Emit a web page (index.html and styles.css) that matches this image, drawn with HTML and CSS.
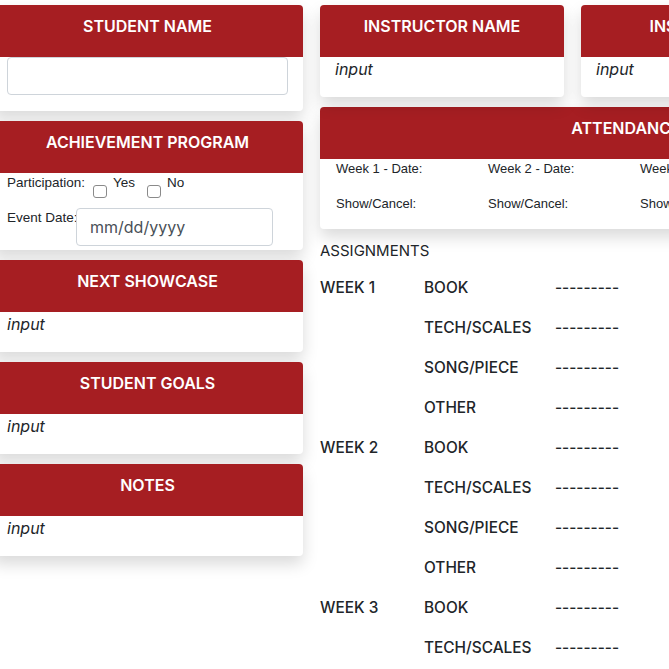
FILE: index.html
```html
<!DOCTYPE html>
<html>
<head>
<meta charset="utf-8">
<link rel="stylesheet" href="styles.css">
</head>
<body>
<div class="page">
  <div class="left">
    <section class="card c-name">
      <h2 class="card-head">STUDENT NAME</h2>
      <div class="card-body pad-bottom">
        <div class="text-field"></div>
      </div>
    </section>
    <section class="card">
      <h2 class="card-head">ACHIEVEMENT PROGRAM</h2>
      <div class="card-body achieve">
        <div class="part-row">
          <span class="small-label">Participation:</span>
          <span class="check"></span>
          <span class="small-label opt">Yes</span>
          <span class="check"></span>
          <span class="small-label opt">No</span>
        </div>
        <div class="date-row">
          <span class="small-label date-label">Event Date:</span>
          <div class="date-field">mm/dd/yyyy</div>
        </div>
      </div>
    </section>
    <section class="card">
      <h2 class="card-head">NEXT SHOWCASE</h2>
      <div class="card-body"><p class="input-text">input</p></div>
    </section>
    <section class="card">
      <h2 class="card-head">STUDENT GOALS</h2>
      <div class="card-body"><p class="input-text">input</p></div>
    </section>
    <section class="card">
      <h2 class="card-head">NOTES</h2>
      <div class="card-body"><p class="input-text">input</p></div>
    </section>
  </div>

  <div class="right">
    <div class="top-row">
      <section class="card narrow">
        <h2 class="card-head">INSTRUCTOR NAME</h2>
        <div class="card-body"><p class="input-text">input</p></div>
      </section>
      <section class="card narrow">
        <h2 class="card-head">INSTRUMENT</h2>
        <div class="card-body"><p class="input-text">input</p></div>
      </section>
    </div>
    <section class="card attendance">
      <h2 class="card-head">ATTENDANCE</h2>
      <div class="card-body att-body">
        <p>Week 1 - Date:</p><p>Week 2 - Date:</p><p>Week 3 - Date:</p><p>Week 4 - Date:</p>
        <p>Show/Cancel:</p><p>Show/Cancel:</p><p>Show/Cancel:</p><p>Show/Cancel:</p>
      </div>
    </section>
    <p class="assign-title">ASSIGNMENTS</p>
    <div class="assign-grid">
      <span>WEEK 1</span><span>BOOK</span><span class="dash">---------</span>
      <span></span><span>TECH/SCALES</span><span class="dash">---------</span>
      <span></span><span>SONG/PIECE</span><span class="dash">---------</span>
      <span></span><span>OTHER</span><span class="dash">---------</span>
      <span>WEEK 2</span><span>BOOK</span><span class="dash">---------</span>
      <span></span><span>TECH/SCALES</span><span class="dash">---------</span>
      <span></span><span>SONG/PIECE</span><span class="dash">---------</span>
      <span></span><span>OTHER</span><span class="dash">---------</span>
      <span>WEEK 3</span><span>BOOK</span><span class="dash">---------</span>
      <span></span><span>TECH/SCALES</span><span class="dash">---------</span>
      <span></span><span>SONG/PIECE</span><span class="dash">---------</span>
      <span></span><span>OTHER</span><span class="dash">---------</span>
    </div>
  </div>
</div>
</body>
</html>
```

FILE: styles.css
```css
* { box-sizing: border-box; }

html, body {
  margin: 0;
  padding: 0;
  background: #fff;
  overflow: hidden;
}

body {
  font-family: Inter, "Liberation Sans", sans-serif;
  color: #212529;
}

.page {
  display: flex;
  align-items: flex-start;
  gap: 17px;
  margin-left: -8px;
  padding-top: 5px;
  width: 1400px;
}

.left {
  width: 311px;
  flex: none;
  display: flex;
  flex-direction: column;
  gap: 10px;
}

.right {
  flex: none;
  width: 1000px;
}

.card {
  background: #fff;
  border-radius: 4px;
  box-shadow: 0 8px 16px rgba(0, 0, 0, 0.15);
}

.card-head {
  margin: 0;
  height: 52px;
  padding-top: 9px;
  background: #a61e22;
  color: #fff;
  text-align: center;
  font-size: 16px;
  line-height: 24px;
  font-weight: 600;
  border-radius: 4px 4px 0 0;
}

.card-body {
  padding: 0 15px;
}

.pad-bottom {
  padding-bottom: 16px;
}

.text-field {
  height: 38px;
  border: 1px solid #ced4da;
  border-radius: 4px;
  background: #fff;
}

.input-text {
  margin: 0;
  padding-bottom: 16px;
  font-size: 16px;
  line-height: 24px;
  font-style: italic;
}

.achieve {
  padding-bottom: 4px;
}

.part-row {
  display: flex;
  align-items: flex-start;
  height: 28px;
}

.small-label {
  font-size: 13.5px;
  line-height: 20px;
  font-family: "Liberation Sans", Arial, sans-serif;
}

.check {
  width: 14px;
  height: 13px;
  margin: 12px 6px 0 8px;
  border: 1px solid #8a8a8a;
  border-radius: 3px;
  background: #fff;
}

.opt + .check {
  margin-left: 12px;
}

.date-row {
  display: flex;
  align-items: flex-start;
  margin-top: 7px;
}

.date-label {
  width: 69px;
  flex: none;
  white-space: nowrap;
}

.date-field {
  width: 197px;
  height: 38px;
  border: 1px solid #ced4da;
  border-radius: 4px;
  padding: 0 13px;
  font-size: 16px;
  line-height: 36px;
  color: #495057;
}

.top-row {
  display: flex;
  gap: 17px;
}

.narrow {
  width: 244px;
  flex: none;
}

.attendance {
  margin-top: 10px;
  width: 612px;
}

.att-body {
  display: grid;
  grid-template-columns: repeat(4, 152px);
  row-gap: 15px;
  padding: 0 16px 15px;
}

.att-body p {
  margin: 0;
  font-size: 13px;
  line-height: 20px;
  font-family: "Liberation Sans", Arial, sans-serif;
}

.assign-title {
  margin: 10px 0 13px;
  font-size: 15px;
  line-height: 24px;
  font-weight: 400;
}

.assign-grid {
  display: grid;
  grid-template-columns: 104px 131px auto;
  row-gap: 16px;
  font-size: 15.4px;
  line-height: 24px;
  font-weight: 500;
}

.dash {
  letter-spacing: 0;
}
```
